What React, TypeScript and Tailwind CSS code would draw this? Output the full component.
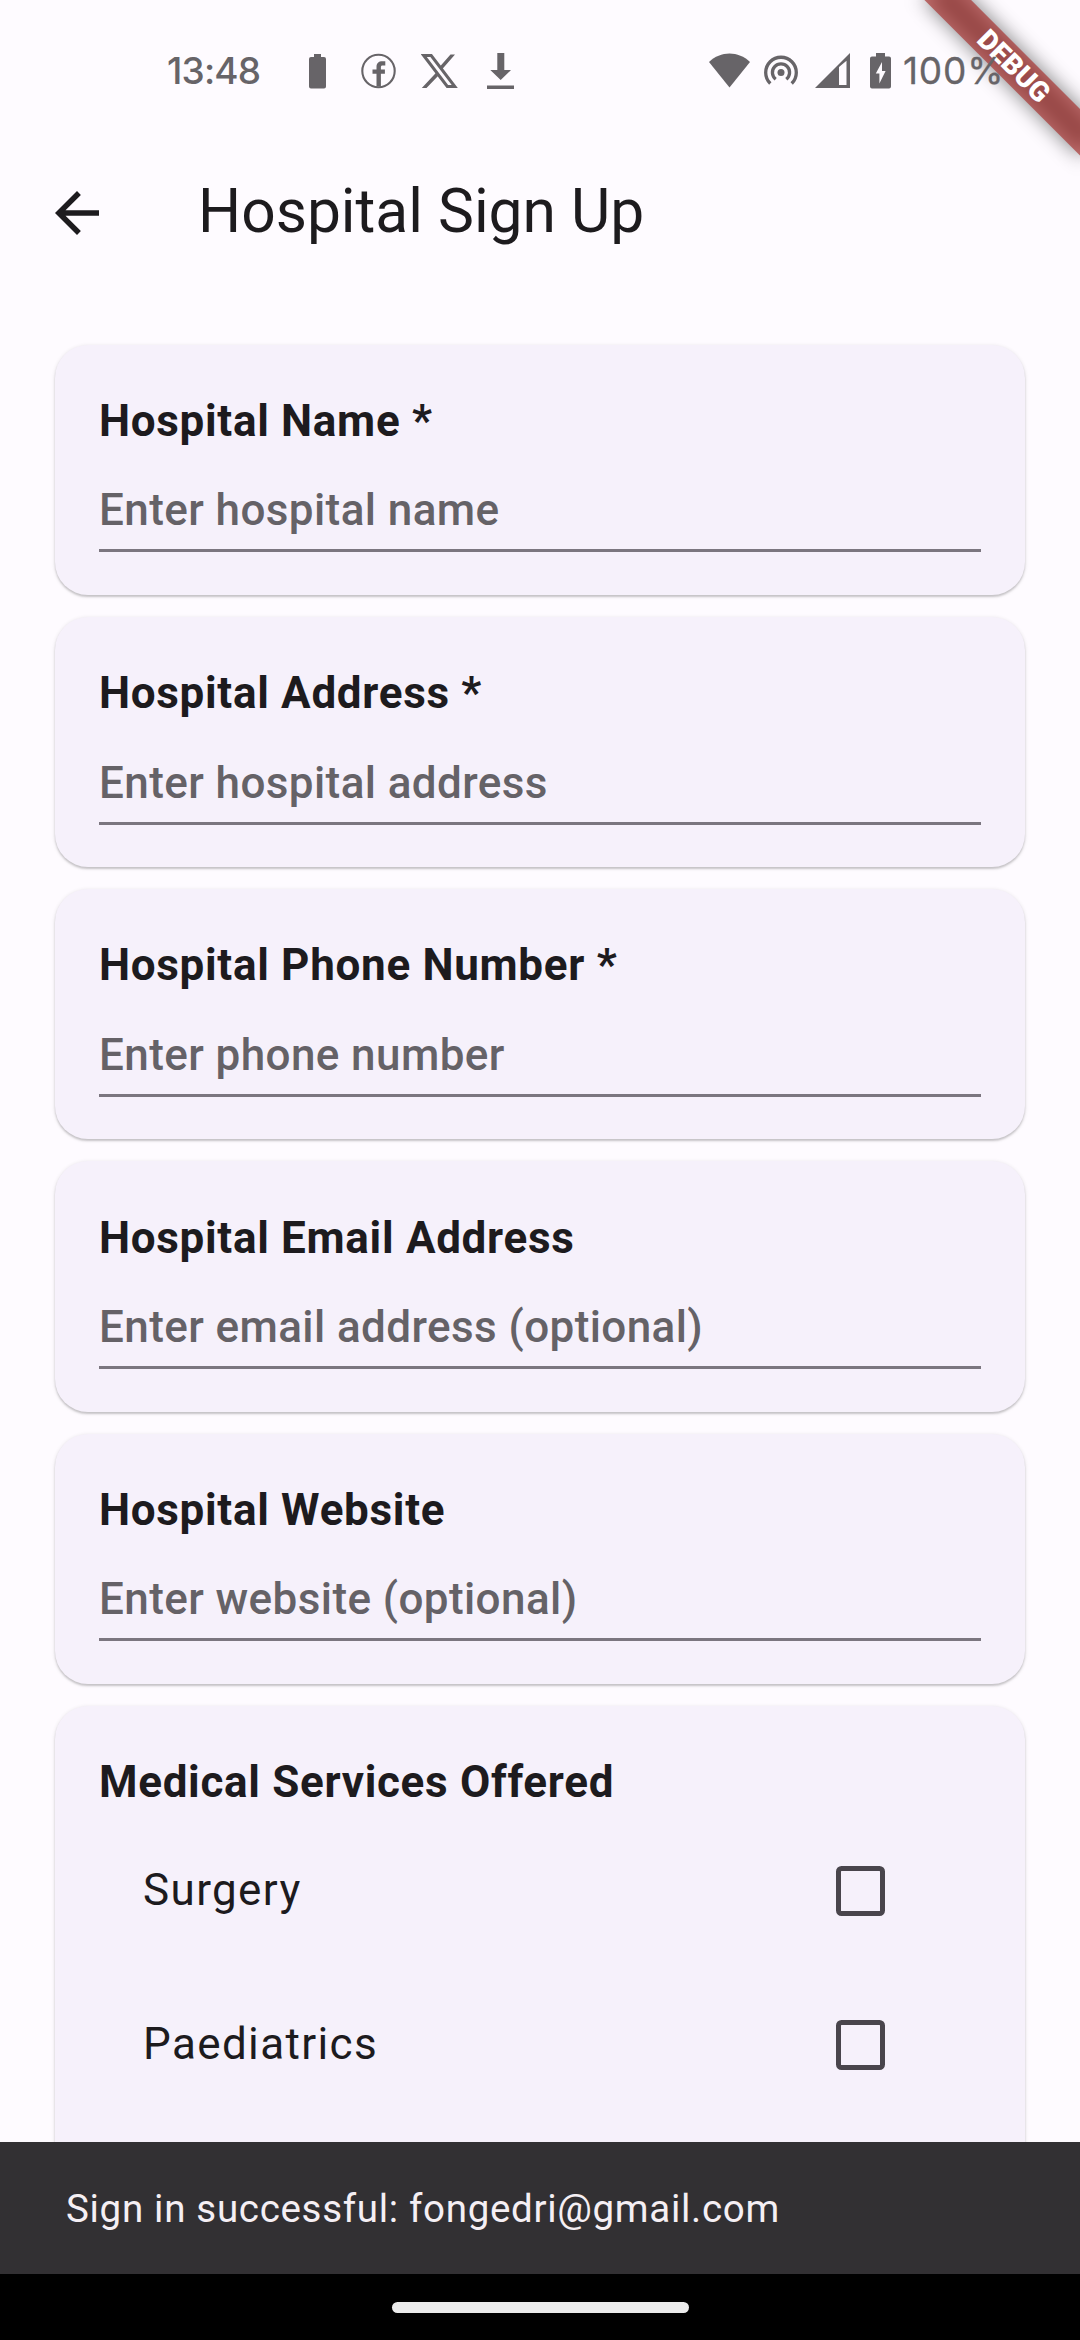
import React from "react";

const fields = [
  { label: "Hospital Name *", hint: "Enter hospital name" },
  { label: "Hospital Address *", hint: "Enter hospital address" },
  { label: "Hospital Phone Number *", hint: "Enter phone number" },
  { label: "Hospital Email Address", hint: "Enter email address (optional)" },
  { label: "Hospital Website", hint: "Enter website (optional)" },
];

const services = ["Surgery", "Paediatrics"];

const cardShadow =
  "rounded-[33px] bg-[#f6f1fb] shadow-[0_2px_2px_rgba(0,0,0,0.16),0_1px_4px_rgba(0,0,0,0.12)]";

function StatusBar() {
  return (
    <div className="relative z-20 flex h-[143px] items-start pt-[48px] text-[#676468]">
      <span className="ml-[167px] w-[142px] font-[Inter] text-[37px] font-medium leading-[45px] tracking-[-0.8px]">
        13:48
      </span>
      <svg className="mt-[6px] h-[35px] w-[17px]" viewBox="0 0 17 35" fill="currentColor">
        <path d="M5 0h7v3h3a2 2 0 0 1 2 2v27.500a2 2 0 0 1-2 2H2a2 2 0 0 1-2-2V5a2 2 0 0 1 2-2h3z" />
      </svg>
      <svg className="ml-[35px] mt-[5px] h-9 w-9" viewBox="0 0 36 36" fill="none">
        <circle cx="17.500" cy="18" r="16.200" stroke="currentColor" strokeWidth="2.100" />
        <path
          d="M15.500 33.500V20.700h-4v-4.300h4v-2.200c0-4.200 2.200-6 5.800-6h3v4.300h-2.700c-1.200 0-1.700.6-1.700 1.700v2.200h4v4.300h-4v12.800z"
          fill="currentColor"
        />
      </svg>
      <svg className="ml-[24px] mt-[6px] h-[35px] w-[37px]" viewBox="0 0 37 35" fill="none">
        <path d="M2.700 1.500h7.500L33.800 32.500h-7.500z" stroke="currentColor" strokeWidth="3" />
        <path d="M29.500.5h4.500L20.500 16l-2.200-2.800zM15.300 18.500l2.200 2.900L5.500 34H.8z" fill="currentColor" />
      </svg>
      <svg className="ml-[29px] mt-[5px] h-9 w-[27px]" viewBox="0 0 27 36" fill="currentColor">
        <path d="M10.300 0h7v17H24L13.700 27 3.300 17h7zM0 32.500h27v3.500H0z" />
      </svg>

      <svg className="ml-[195px] mt-[5px] h-[35px] w-[41px]" viewBox="0 0 41 35" fill="currentColor">
        <path d="M0 9C11.500-2.500 29.500-2.500 41 9L20.500 34.500z" />
      </svg>
      <svg className="ml-[14px] mt-[5px] h-9 w-[34px]" viewBox="0 0 34 36" fill="none" stroke="currentColor" strokeWidth="3.300">
        <circle cx="17" cy="19.500" r="3.500" fill="currentColor" stroke="none" />
        <path d="M11.700 26.200A8.600 8.600 0 1 1 22.300 26.200" />
        <path d="M6.300 30.500A15.300 15.300 0 1 1 27.700 30.500" />
      </svg>
      <svg className="ml-[17px] mt-[5px] h-[35px] w-[35px]" viewBox="0 0 35 35" fill="currentColor">
        <path fillRule="evenodd" d="M35 0v35H0zM24 14v18h7.500V7.800z" />
      </svg>
      <svg className="ml-[20px] mt-[5px] h-9 w-[21px]" viewBox="0 0 21 36" fill="currentColor">
        <path
          fillRule="evenodd"
          d="M6 0h9v3.500h4a2 2 0 0 1 2 2V33.500a2 2 0 0 1-2 2H2a2 2 0 0 1-2-2V5.500a2 2 0 0 1 2-2h4zM12 9L5.800 20.500h3.600V30.500L15.600 18H12z"
        />
      </svg>
      <span className="ml-[12px] font-[Inter] text-[37px] leading-[45px] tracking-[0.8px] [-webkit-text-stroke:0.3px_#676468]">
        100%
      </span>
    </div>
  );
}

function DebugBanner() {
  return (
    <div className="absolute right-0 top-0 z-10 h-[240px] w-[240px] overflow-hidden">
      <div className="absolute right-[-220px] top-[-110px] h-[220px] w-[440px] rotate-45">
        <div className="absolute left-[110px] top-[187px] h-[33px] w-[220px] bg-black/50 blur-[10px]" />
        <div className="absolute left-[90px] top-[187px] flex h-[33px] w-[260px] items-center justify-center bg-[#a62724]/63 font-[Roboto] text-[28px] font-black leading-none text-white">
          DEBUG
        </div>
      </div>
    </div>
  );
}

function AppBar() {
  return (
    <header className="flex h-[154px] items-center pl-[44px] pt-px pb-[17px]">
      <svg className="mt-[1px] h-[66px] w-[66px]" viewBox="0 0 24 24" fill="#1d1b1e">
        <path d="M20 11H7.830l5.590-5.590L12 4l-8 8 8 8 1.410-1.410L7.830 13H20v-2z" />
      </svg>
      <h1 className="mb-[2px] ml-[88px] text-[60.5px] font-normal leading-[77px]">Hospital Sign Up</h1>
    </header>
  );
}

function FieldCard({ label, hint }: { label: string; hint: string }) {
  return (
    <section className={`h-[250.25px] shrink-0 px-[44px] pt-[43.3px] ${cardShadow}`}>
      <h2 className="text-[44px] font-bold leading-[66px] tracking-[0.69px]">{label}</h2>
      <div className="flex h-[98.7px] items-start border-b-[3px] border-[#7b767f] pt-[23.6px]">
        <span className="text-[44px] font-medium leading-[66px] tracking-[0.41px] text-[#656267]">
          {hint}
        </span>
      </div>
    </section>
  );
}

export default function App() {
  return (
    <div className="relative flex h-[2340px] w-[1080px] flex-col overflow-hidden bg-[#fefbff] font-[Roboto,sans-serif] text-[#1d1b1e]">
      <StatusBar />
      <DebugBanner />
      <AppBar />
      <main className="flex min-h-0 flex-1 flex-col gap-[22px] overflow-hidden px-[55px] pt-[47.5px]">
        {fields.map((f) => (
          <FieldCard key={f.label} label={f.label} hint={f.hint} />
        ))}
        <section className={`h-[600px] shrink-0 px-[44px] pt-[43px] ${cardShadow}`}>
          <h2 className="mb-[-2px] text-[44px] font-bold leading-[66px] tracking-[0.69px]">
            Medical Services Offered
          </h2>
          {services.map((s) => (
            <label
              key={s}
              className="flex h-[154px] items-center justify-between pl-[44px] pr-[96px]"
            >
              <span className="mt-px text-[44px] leading-[66px] tracking-[1.375px]">{s}</span>
              <span className="mt-[2px] h-[49.5px] w-[49.5px] rounded-[5.5px] border-[5.5px] border-[#49454c]" />
            </label>
          ))}
        </section>
      </main>
      <div className="flex h-[132px] shrink-0 items-center bg-[#323033] pl-[66px] pt-px text-[38.5px] tracking-[0.69px] text-[#f5eff4]">
        Sign in successful: fongedri@gmail.com
      </div>
      <nav className="flex h-[66px] shrink-0 items-center justify-center bg-black">
        <span className="h-[11px] w-[297px] rounded-full bg-[#ececec]" />
      </nav>
    </div>
  );
}
